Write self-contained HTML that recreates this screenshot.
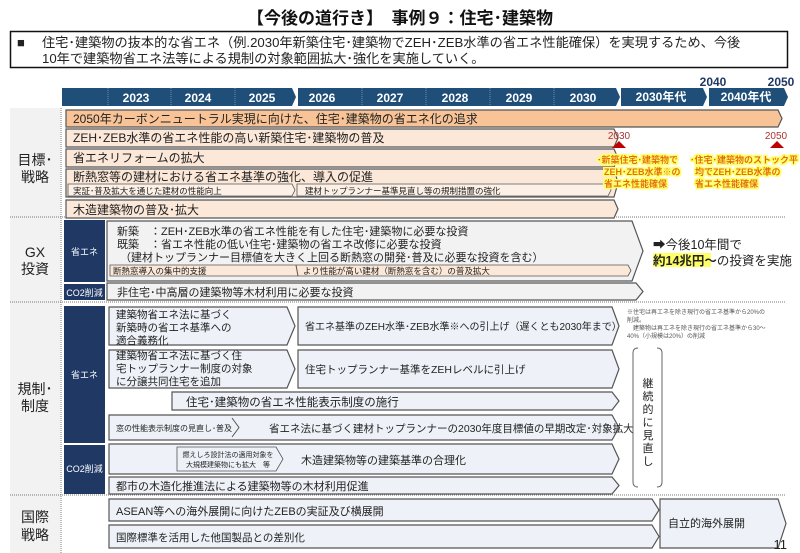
<!DOCTYPE html>
<html><head><meta charset="utf-8"><style>
html,body{margin:0;padding:0;background:#fff}
svg{display:block}
text{font-family:"Liberation Sans","Noto Sans CJK JP",sans-serif}
</style></head><body>
<svg width="800" height="553" viewBox="0 0 800 553" xmlns="http://www.w3.org/2000/svg" fill="#222">
<defs>
<filter id="glow" x="-10%" y="-20%" width="120%" height="140%">
<feMorphology in="SourceAlpha" operator="dilate" radius="1.6" result="d"/>
<feFlood flood-color="#ffff66"/><feComposite in2="d" operator="in" result="g"/>
<feMerge><feMergeNode in="g"/><feMergeNode in="SourceGraphic"/></feMerge>
</filter>
</defs>
<text x="400" y="24" font-size="17" font-weight="bold" text-anchor="middle" fill="#111">【今後の道行き】　事例９：住宅･建築物</text>
<rect x="10.5" y="31.5" width="777" height="36" fill="#fff" stroke="#111" stroke-width="1.5"/>
<text x="17" y="47" font-size="13">■</text>
<text x="42" y="47" font-size="13.2">住宅･建築物の抜本的な省エネ（例.2030年新築住宅･建築物でZEH･ZEB水準の省エネ性能確保）を実現するため、今後</text>
<text x="42" y="63" font-size="13.2">10年で建築物省エネ法等による規制の対象範囲拡大･強化を実施していく。</text>

<rect x="10" y="108" width="50" height="445" fill="#f2f2f2"/>
<line x1="61" y1="108" x2="61" y2="553" stroke="#777" stroke-dasharray="1,1"/>
<g stroke="#777" stroke-dasharray="1,1">
<line x1="10" y1="217" x2="785" y2="217"/>
<line x1="10" y1="302" x2="785" y2="302"/>
<line x1="10" y1="495" x2="785" y2="495"/>
</g>
<text x="35" y="165" font-size="14" text-anchor="middle">目標･</text>
<text x="35" y="182" font-size="14" text-anchor="middle">戦略</text>
<text x="35" y="257" font-size="14" text-anchor="middle">GX</text>
<text x="35" y="274" font-size="14" text-anchor="middle">投資</text>
<text x="35" y="394" font-size="14" text-anchor="middle">規制･</text>
<text x="35" y="411" font-size="14" text-anchor="middle">制度</text>
<text x="35" y="522" font-size="14" text-anchor="middle">国際</text>
<text x="35" y="540" font-size="14" text-anchor="middle">戦略</text>

<polygon points="62,88 292,88 296,97 292,106 62,106" fill="#1f4e79"/>
<polygon points="298,88 616,88 620,97 616,106 298,106" fill="#1f4e79"/>
<polygon points="621,88 703,88 707,97 703,106 621,106" fill="#1f4e79"/>
<polygon points="709,88 784,88 788,97 784,106 709,106" fill="#1f4e79"/>
<g stroke="#6f8db5" stroke-dasharray="1,1">
<line x1="108" y1="88" x2="108" y2="106"/><line x1="171" y1="88" x2="171" y2="106"/><line x1="235" y1="88" x2="235" y2="106"/>
<line x1="362" y1="88" x2="362" y2="106"/><line x1="426" y1="88" x2="426" y2="106"/><line x1="490" y1="88" x2="490" y2="106"/><line x1="554" y1="88" x2="554" y2="106"/>
</g>
<g font-size="12" font-weight="bold" fill="#fff" text-anchor="middle">
<text x="136" y="102">2023</text><text x="198" y="102">2024</text><text x="262" y="102">2025</text>
<text x="322" y="102">2026</text><text x="390" y="102">2027</text><text x="455" y="102">2028</text>
<text x="519" y="102">2029</text><text x="583" y="102">2030</text>
<text x="661" y="101">2030年代</text><text x="746" y="101">2040年代</text>
</g>
<text x="713" y="86" font-size="12" font-weight="bold" text-anchor="middle" fill="#1f3864">2040</text>
<text x="781" y="86" font-size="12" font-weight="bold" text-anchor="middle" fill="#1f3864">2050</text>

<g stroke="#555" stroke-width="1.2">
<polygon points="66,110 778,110 782,118.5 778,127 66,127" fill="#f8c497"/>
<polygon points="66,129 614,129 618,138 614,147 66,147" fill="#fce8d8"/>
<polygon points="66,149 614,149 618,158 614,167 66,167" fill="#fce8d8"/>
<polygon points="66,169 614,169 618,183 614,197 66,197" fill="#fce8d8"/>
<polygon points="68,184 292,184 295,190 292,196 68,196" fill="#fdf0e6" stroke-width="0.8"/>
<polygon points="297,184 608,184 611,190 608,196 297,196" fill="#fdf0e6" stroke-width="0.8"/>
<polygon points="66,200 614,200 618,209 614,218 66,218" fill="#fce8d8"/>
</g>
<text x="73" y="123" font-size="12">2050年カーボンニュートラル実現に向けた、住宅･建築物の省エネ化の追求</text>
<text x="73" y="142" font-size="12">ZEH･ZEB水準の省エネ性能の高い新築住宅･建築物の普及</text>
<text x="73" y="162" font-size="12">省エネリフォームの拡大</text>
<text x="73" y="181" font-size="12">断熱窓等の建材における省エネ基準の強化、導入の促進</text>
<text x="73" y="194" font-size="8.5">実証･普及拡大を通じた建材の性能向上</text>
<text x="305" y="194" font-size="8.5">建材トップランナー基準見直し等の規制措置の強化</text>
<text x="73" y="214" font-size="12">木造建築物の普及･拡大</text>
<text x="619" y="139" font-size="10" fill="#a33" text-anchor="middle">2030</text>
<text x="776" y="139" font-size="10" fill="#a33" text-anchor="middle">2050</text>
<polygon points="612,148 619,141 626,148" fill="#c00000"/>
<polygon points="770,148 777,141 784,148" fill="#c00000"/>
<g font-size="9" font-weight="bold" filter="url(#glow)" fill="#e36c09">
<text x="597" y="163">･新築住宅･建築物で</text>
<text x="604" y="175">ZEH･ZEB水準※の</text>
<text x="604" y="187">省エネ性能確保</text>
<text x="690" y="163">･住宅･建築物のストック平</text>
<text x="695" y="175">均でZEH･ZEB水準の</text>
<text x="695" y="187">省エネ性能確保</text>
</g>

<rect x="64" y="220" width="41" height="62" fill="#1f3864"/>
<rect x="64" y="284" width="41" height="16" fill="#1f3864"/>
<text x="84.5" y="255" font-size="9" fill="#fff" text-anchor="middle">省エネ</text>
<text x="84.5" y="296" font-size="9" fill="#fff" text-anchor="middle">CO2削減</text>
<g stroke="#555" stroke-width="1.2">
<polygon points="107,221 632,221 643,251 632,281 107,281" fill="#f2f2f2"/>
<polygon points="110,265 628,265 631,270.5 628,276 110,276" fill="#fce8d8" stroke-width="0.8"/>
<polygon points="107,283 636,283 643,291.5 636,300 107,300" fill="#f2f2f2"/>
</g>
<line x1="296" y1="265" x2="298" y2="276" stroke="#555"/>
<text x="117" y="235" font-size="11">新築　：ZEH･ZEB水準の省エネ性能を有した住宅･建築物に必要な投資</text>
<text x="117" y="248" font-size="11">既築　：省エネ性能の低い住宅･建築物の省エネ改修に必要な投資</text>
<text x="120" y="261" font-size="11">（建材トップランナー目標値を大きく上回る断熱窓の開発･普及に必要な投資を含む）</text>
<text x="113" y="274" font-size="8.5">断熱窓導入の集中的支援</text>
<text x="303" y="274" font-size="8.5">より性能が高い建材（断熱窓を含む）の普及拡大</text>
<text x="117" y="296" font-size="11">非住宅･中高層の建築物等木材利用に必要な投資</text>
<text x="653" y="249" font-size="12.5">➡今後10年間で</text>
<rect x="653" y="253" width="58" height="14" fill="#ffff66"/>
<text x="653" y="265" font-size="12.5"><tspan font-weight="bold">約14兆円～</tspan>の投資を実施</text>

<rect x="64" y="306" width="41" height="137" fill="#1f3864"/>
<rect x="64" y="445" width="41" height="49" fill="#1f3864"/>
<text x="84.5" y="378" font-size="9" fill="#fff" text-anchor="middle">省エネ</text>
<text x="84.5" y="472" font-size="9" fill="#fff" text-anchor="middle">CO2削減</text>
<g stroke="#555" stroke-width="1.2" fill="#eef2f8">
<polygon points="109,307 287,307 295,326 287,345 109,345"/>
<polygon points="298,307 612,307 619,326 612,345 298,345"/>
<polygon points="109,350 287,350 295,369 287,388 109,388"/>
<polygon points="298,350 612,350 619,369 612,388 298,388"/>
<polygon points="172,392 612,392 619,401 612,410 172,410"/>
<polygon points="109,415 612,415 619,427.5 612,440 109,440"/>
<polygon points="109,444 612,444 619,459 612,474 109,474"/>
<polygon points="109,477 612,477 619,485.5 612,494 109,494"/>
<polygon points="109,499 652,499 659,510 652,521 109,521"/>
<polygon points="109,525 652,525 659,536.5 652,548 109,548"/>
<polygon points="660,499 778,499 786,523.5 778,548 660,548"/>
</g>
<polyline points="232,418 239,427.5 232,437" fill="none" stroke="#555"/>
<polygon points="177,447 276,447 283,459 276,471 177,471" fill="#eef2f8" stroke="#555" stroke-width="0.8"/>
<text x="116" y="318" font-size="10.5">建築物省エネ法に基づく</text>
<text x="116" y="331" font-size="10.5">新築時の省エネ基準への</text>
<text x="116" y="344" font-size="10.5">適合義務化</text>
<text x="305" y="330" font-size="10">省エネ基準のZEH水準･ZEB水準※への引上げ（遅くとも2030年まで）</text>
<text x="116" y="359" font-size="10.5">建築物省エネ法に基づく住</text>
<text x="116" y="372" font-size="10.5">宅トップランナー制度の対象</text>
<text x="116" y="385" font-size="10.5">に分譲共同住宅を追加</text>
<text x="305" y="373" font-size="10.5">住宅トップランナー基準をZEHレベルに引上げ</text>
<text x="186" y="406" font-size="11.5">住宅･建築物の省エネ性能表示制度の施行</text>
<text x="116" y="431" font-size="8">窓の性能表示制度の見直し･普及</text>
<text x="269" y="432" font-size="10.5">省エネ法に基づく建材トップランナーの2030年度目標値の早期改定･対象拡大</text>
<text x="228" y="457" font-size="7" text-anchor="middle">燃えしろ設計法の適用対象を</text>
<text x="228" y="467" font-size="7" text-anchor="middle">大規模建築物にも拡大　等</text>
<text x="301" y="464" font-size="11">木造建築物等の建築基準の合理化</text>
<text x="116" y="490" font-size="11">都市の木造化推進法による建築物等の木材利用促進</text>
<text x="116" y="515" font-size="11">ASEAN等への海外展開に向けたZEBの実証及び横展開</text>
<text x="116" y="541" font-size="10.5">国際標準を活用した他国製品との差別化</text>
<text x="668" y="527" font-size="11">自立的海外展開</text>
<text x="787" y="549" font-size="13" text-anchor="end">11</text>

<g font-size="6" fill="#555">
<text x="627" y="314">※住宅は再エネを除き現行の省エネ基準から20%の</text>
<text x="627" y="322">削減。</text>
<text x="627" y="330">　建築物は再エネを除き現行の省エネ基準から30～</text>
<text x="627" y="338">40%（小規模は20%）の削減</text>
</g>
<path d="M638,348 Q633,348 633,353 L633,482 Q633,487 638,487 M657,348 Q662,348 662,353 L662,482 Q662,487 657,487" fill="none" stroke="#666"/>
<g font-size="11" text-anchor="middle">
<text x="648" y="387">継</text><text x="648" y="400">続</text><text x="648" y="413">的</text><text x="648" y="426">に</text><text x="648" y="439">見</text><text x="648" y="452">直</text><text x="648" y="465">し</text>
</g>
</svg>
</body></html>
